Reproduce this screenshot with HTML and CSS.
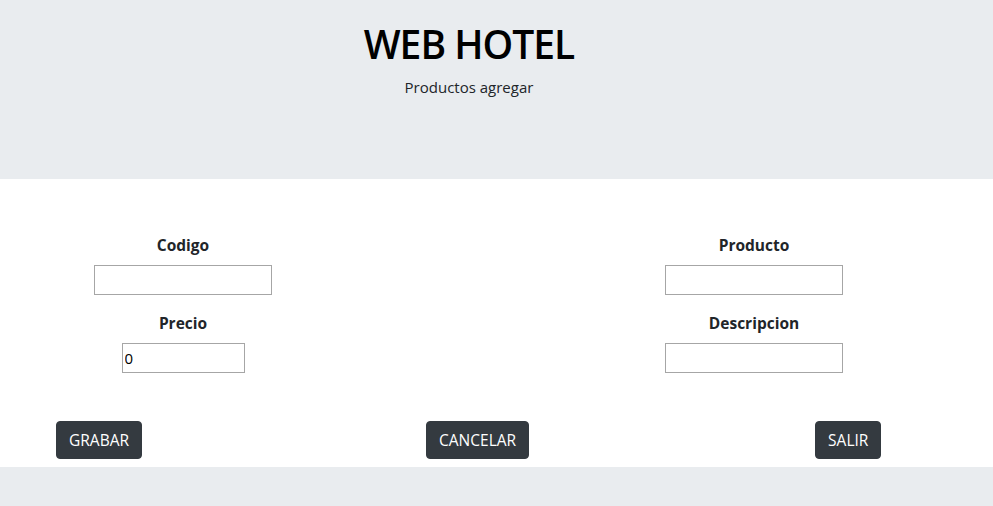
FILE: index.html
```html
<!DOCTYPE html>
<html lang="es">
<head>
<meta charset="utf-8">
<title>WEB HOTEL</title>
<link rel="stylesheet" href="styles.css">
</head>
<body>
<header class="hero">
  <div class="hero-inner">
    <h1 class="hero-title">WEB HOTEL</h1>
    <p class="hero-sub">Productos agregar</p>
  </div>
</header>
<main class="panel">
  <form class="form">
    <div class="form-grid">
      <div class="col">
        <div class="field">
          <label class="label" for="codigo">Codigo</label>
          <input class="input" id="codigo" type="text">
        </div>
        <div class="field">
          <label class="label" for="precio">Precio</label>
          <input class="input input-short" id="precio" type="text" value="0">
        </div>
      </div>
      <div class="col">
        <div class="field">
          <label class="label" for="producto">Producto</label>
          <input class="input" id="producto" type="text">
        </div>
        <div class="field">
          <label class="label" for="descripcion">Descripcion</label>
          <input class="input" id="descripcion" type="text">
        </div>
      </div>
    </div>
    <div class="actions">
      <button type="button" class="btn">GRABAR</button>
      <button type="button" class="btn">CANCELAR</button>
      <button type="button" class="btn btn-last">SALIR</button>
    </div>
  </form>
</main>
</body>
</html>
```

FILE: styles.css
```css
* { box-sizing: border-box; }
html, body { margin: 0; padding: 0; }
body {
  background: #e9ecef;
  font-family: "Open Sans", "Noto Sans", sans-serif;
  color: #212529;
  font-size: 16px;
  line-height: 1.5;
}
.hero {
  background: #e9ecef;
  height: 179px;
  padding-top: 21px;
}
.hero-inner {
  width: 938px;
  text-align: center;
}
.hero-title {
  margin: 0 0 8px;
  font-size: 39px;
  font-weight: 600;
  line-height: 1.2;
  color: #000;
  letter-spacing: -1px;
}
.hero-sub {
  margin: 0;
  font-size: 15px;
  color: #212529;
}
.panel {
  background: #fff;
  height: 288px;
  padding-top: 54px;
}
.form-grid {
  display: flex;
  gap: 205px;
}
.col {
  width: 366px;
  display: flex;
  flex-direction: column;
  gap: 16px;
}
.field {
  display: flex;
  flex-direction: column;
  align-items: center;
}
.label {
  font-weight: 700;
  font-size: 15.5px;
  line-height: 24px;
  margin-bottom: 8px;
}
.input {
  width: 178px;
  height: 30px;
  border: 1px solid #a6a6a6;
  background: #fff;
  font-family: "Open Sans", sans-serif;
  font-size: 15px;
  padding: 0 2px;
  color: #000;
}
.input-short {
  width: 123px;
}
.actions {
  display: flex;
  padding-left: 56px;
  margin-top: 48px;
  gap: 284px;
}
.btn {
  background: #343a40;
  color: #fff;
  border: 1px solid #343a40;
  border-radius: 4px;
  font-family: "Open Sans", sans-serif;
  font-size: 15.5px;
  line-height: 24px;
  padding: 6px 12px;
  height: 38px;
}
.btn-last {
  margin-left: 2px;
}
```
